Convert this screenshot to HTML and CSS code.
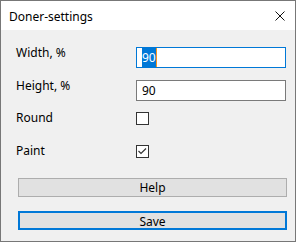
FILE: index.html
```html
<!DOCTYPE html>
<html lang="en">

<head>
    <meta name="viewport" content="width=device-width, initial-scale=1.0">
    <title>Doner-settings</title>
    <link rel="stylesheet" href="styles.css">
</head>
<body>

    <div class="window">
        <!-- Title bar -->
        <div class="titlebar">
            <span class="title">Doner-settings</span>
            <svg class="close" width="10" height="10" viewBox="0 0 10 10">
                <path d="M0.5 0.5 L9.5 9.5 M9.5 0.5 L0.5 9.5" stroke="#111" stroke-width="1" fill="none"/>
            </svg>
        </div>

        <!-- Form -->
        <div class="content">
            <div class="row row-width">
                <span class="label">Width, %</span>
                <div class="textbox focused"><span class="selected">90</span></div>
            </div>
            <div class="row row-height">
                <span class="label">Height, %</span>
                <div class="textbox">90</div>
            </div>
            <div class="row row-round">
                <span class="label">Round</span>
                <div class="checkbox"></div>
            </div>
            <div class="row row-paint">
                <span class="label">Paint</span>
                <div class="checkbox">
                    <svg width="11" height="11" viewBox="0 0 11 11">
                        <polyline points="1.5,5 4,7.5 9,2.5" stroke="#333" stroke-width="1.2" fill="none"/>
                    </svg>
                </div>
            </div>

            <button class="btn btn-help">Help</button>
            <button class="btn btn-save">Save</button>
        </div>
    </div>

</body>

</html>
```

FILE: styles.css
```css
/* General */
body {
    margin: 0;
    font-family: 'Segoe UI', 'Noto Sans', sans-serif;
    font-size: 12px;
    color: #000;
}

/* Window frame */
.window {
    width: 296px;
    height: 242px;
    box-sizing: border-box;
    border: 1px solid #777;
    background-color: #f0f0f0;
    display: flex;
    flex-direction: column;
}

/* Title bar */
.titlebar {
    height: 29px;
    background-color: white;
    display: flex;
    align-items: center;
    justify-content: space-between;
    padding: 0 10px 0 8px;
}

.title {
    font-size: 12px;
    margin-top: 1px;
}

.close {
    display: block;
}

/* Form area */
.content {
    display: flex;
    flex-direction: column;
    padding: 17px 9px 0 15px;
}

.row {
    display: flex;
    align-items: flex-start;
}

.row-height {
    margin-top: 12px;
}

.row-round {
    margin-top: 11px;
}

.row-paint {
    margin-top: 20px;
}

.label {
    width: 120px;
    line-height: 14px;
    margin-top: -1px;
}

/* Text boxes */
.textbox {
    width: 150px;
    height: 21px;
    box-sizing: border-box;
    border: 1px solid #7a7a7a;
    background-color: white;
    padding-left: 5px;
    line-height: 19px;
}

.textbox.focused {
    border-color: #0078d7;
}

.selected {
    background-color: #0078d7;
    color: white;
    border-right: 1px solid #f7931e;
    padding: 1px 0;
}

/* Check boxes */
.checkbox {
    width: 13px;
    height: 13px;
    box-sizing: border-box;
    border: 1px solid #333;
    background-color: white;
}

.checkbox svg {
    display: block;
}

/* Buttons */
.btn {
    width: 269px;
    height: 19px;
    box-sizing: border-box;
    font-family: inherit;
    font-size: 12px;
    color: #000;
    background-color: #e1e1e1;
    border: 1px solid #adadad;
    padding: 0;
    margin-left: 2px;
}

.btn-help {
    margin-top: 20px;
}

.btn-save {
    margin-top: 14px;
    border: 2px solid #0078d7;
}
```
